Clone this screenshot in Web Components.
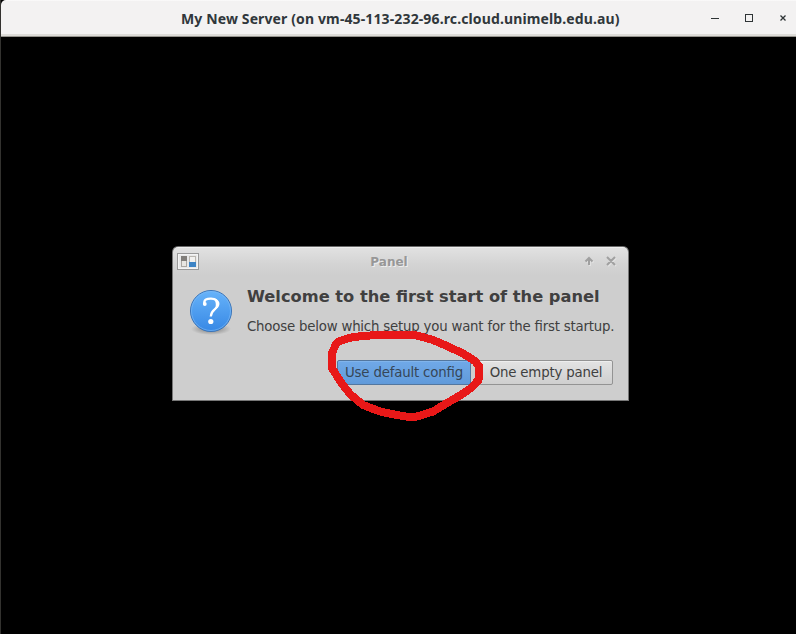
<!DOCTYPE html>
<html lang="en"><head><meta charset="utf-8"><title>My New Server</title>
<style>html,body{margin:0;height:100%;background:#000;overflow:hidden}</style></head>
<body>
<remote-window>
  <title-bar slot="bar">My New Server (on vm-45-113-232-96.rc.cloud.unimelb.edu.au)</title-bar>
  <panel-dialog>
    <span slot="title">Panel</span>
    <span slot="heading">Welcome to the first start of the panel</span>
    <span slot="text">Choose below which setup you want for the first startup.</span>
    <panel-button slot="actions" primary>Use default config</panel-button>
    <panel-button slot="actions">One empty panel</panel-button>
  </panel-dialog>
  <pen-mark slot="mark"></pen-mark>
</remote-window>
<script>
const define=(name,html)=>customElements.define(name,class extends HTMLElement{
  constructor(){super();this.attachShadow({mode:'open'}).innerHTML=html;}
});
define('remote-window',`<style>
:host{display:flex;flex-direction:column;position:relative;width:796px;height:634px;box-sizing:border-box;background:#000;border-left:1px solid #33322f;overflow:hidden}
main{flex:1;display:flex;align-items:flex-start;padding:209px 0 0 171px}
</style><slot name="bar"></slot><main><slot></slot></main><slot name="mark"></slot>`);
define('title-bar',`<style>
:host{display:grid;grid-template-columns:1fr auto;align-items:center;height:37px;box-sizing:border-box;background:linear-gradient(#fff 0,#f3f2f2 1px,#f3f2f2 34px,#dddcd8 34px,#dddcd8 36px,#96948e 36px);border-top-left-radius:5px;color:#30373b;font:bold 14px "Noto Sans",sans-serif}
.t{padding-left:180px;white-space:nowrap;letter-spacing:.125px;line-height:20px}
svg{display:block;width:96px;height:37px}
</style><div><span class="t"><slot></slot></span></div>
<svg viewBox="700 0 96 37" fill="none" stroke="#2e3436"><path d="M711 18.5h8"/><rect x="745.5" y="14.5" width="7" height="7"/><path d="M780.5 15.5l5 5m0-5l-5 5" stroke-width="1.3"/></svg>`);
define('panel-dialog',`<style>
:host{display:flex;flex-direction:column;width:457px;height:155px;box-sizing:border-box;border:1px solid #777;border-top-color:#686868;border-radius:6px 6px 0 0;background:linear-gradient(#eee 1px,#e1e1e1 1px,#d3d3d3 18px,#cecece 28px);color:#404040;font:13.33px "DejaVu Sans",sans-serif;font-feature-settings:"liga" 1}
header{height:29px;display:grid;grid-template-columns:30px 1fr 53px;align-items:center;white-space:nowrap}
header b{font-size:12px;color:#979797;text-shadow:1px 1px #eee;text-align:center}
header svg{display:block}
.body{display:flex;height:84px}
.icon{width:74px}
.copy{padding-top:11px;white-space:nowrap}
h1{font-size:16.26px;line-height:20px;margin:0 0 11px}
p{margin:0;line-height:18px;letter-spacing:-.205px}
.actions{display:flex;justify-content:flex-end;gap:8px;padding:0 15px 0 0}
</style>
<header><svg width="30" height="29" viewBox="173 247 30 29"><rect x="177.5" y="253.5" width="21" height="16" fill="#e8e8e8" stroke="#999"/><rect x="178.5" y="254.5" width="19" height="14" fill="none" stroke="#f4f4f4"/><rect x="181.5" y="256.5" width="5" height="10" fill="#e8e6e2" stroke="#aaa6a1"/><path d="M181 256h6v5h-6z" fill="#817e7a"/><rect x="189.5" y="256.5" width="6" height="10" fill="#f2f1ef" stroke="#b9b6b0"/><path d="M189 262h7v5h-7z" fill="#3d84c5"/></svg>
<b><slot name="title"></slot></b>
<svg width="53" height="29" viewBox="575 247 53 29" fill="none" stroke-width="2"><g stroke="#e2e2e2" transform="translate(1 1)"><path d="M589 265v-6M585.5 261.5l3.5-3.5 3.5 3.500M607 257l8 8m0-8l-8 8"/></g><g stroke="#a0a0a0"><path d="M589 265v-6M585.5 261.5l3.5-3.5 3.5 3.5M607 257l8 8m0-8l-8 8"/></g></svg></header>
<div class="body"><div class="icon"><svg width="74" height="84" viewBox="173 276 74 84"><defs><linearGradient id="g" x2="0" y2="1"><stop stop-color="#67b3fa"/><stop offset="1" stop-color="#3788e5"/></linearGradient><radialGradient id="s"><stop stop-color="#777"/><stop offset="1" stop-color="#777" stop-opacity="0"/></radialGradient></defs><ellipse cx="211" cy="329" rx="20" ry="6" fill="url(#s)"/><circle cx="211" cy="311" r="20.5" fill="url(#g)" stroke="#3a74b8"/><circle cx="211" cy="311" r="19.5" fill="none" stroke="#80bdf7" opacity=".6"/><path d="M204.500 304.500C203 298.500 208 298.700 211 298.700C216 298.700 217.700 301 217.700 304.500C217.700 309.500 210.800 309.500 210.800 316.500" fill="none" stroke="#fff" stroke-width="2.200"/><circle cx="204.800" cy="304" r="1.900" fill="#fff"/><path d="M214 298c8 3 6.500 9 .5 12.500q3-6-.5-12.500z" fill="#fff"/><circle cx="210.800" cy="321.500" r="2.600" fill="#fff"/></svg></div>
<div class="copy"><h1><slot name="heading"></slot></h1><p><slot name="text"></slot></p></div></div>
<div class="actions"><slot name="actions"></slot></div>`);
define('panel-button',`<style>
:host{display:grid;place-items:center;height:25px;width:134px;box-sizing:border-box;border:1px solid #939393;border-radius:2px;background:linear-gradient(#e3e3e3,#cfcfcf);box-shadow:inset 0 1px #eee;color:#404040;white-space:nowrap;line-height:18px;letter-spacing:-.18px}
:host([primary]){border-color:#53779f;background:linear-gradient(#70a9e8,#609ada);box-shadow:inset 0 1px #80b4ec;color:#364657}
</style><span><slot></slot></span>`);
define('pen-mark',`<style>:host{position:absolute;left:-1px;top:0;width:796px;height:634px;pointer-events:none}svg{display:block}</style>
<svg width="796" height="634" fill="none" stroke="#e81818" stroke-width="8" stroke-linejoin="round" shape-rendering="crispEdges"><path d="M339.500 341L353 337L370 335.500L387 334.500L417 335.500L433 340L448 346.500L463 353.500L475 361L479.500 367L478.500 380L471 388L460 395.500L447 403L433 411.500L417 416.500L409 417L397 415L380 411.500L363 405L350 394L340 381L332 368L332 353L336 344Z"/></svg>`);
</script>
</body></html>
